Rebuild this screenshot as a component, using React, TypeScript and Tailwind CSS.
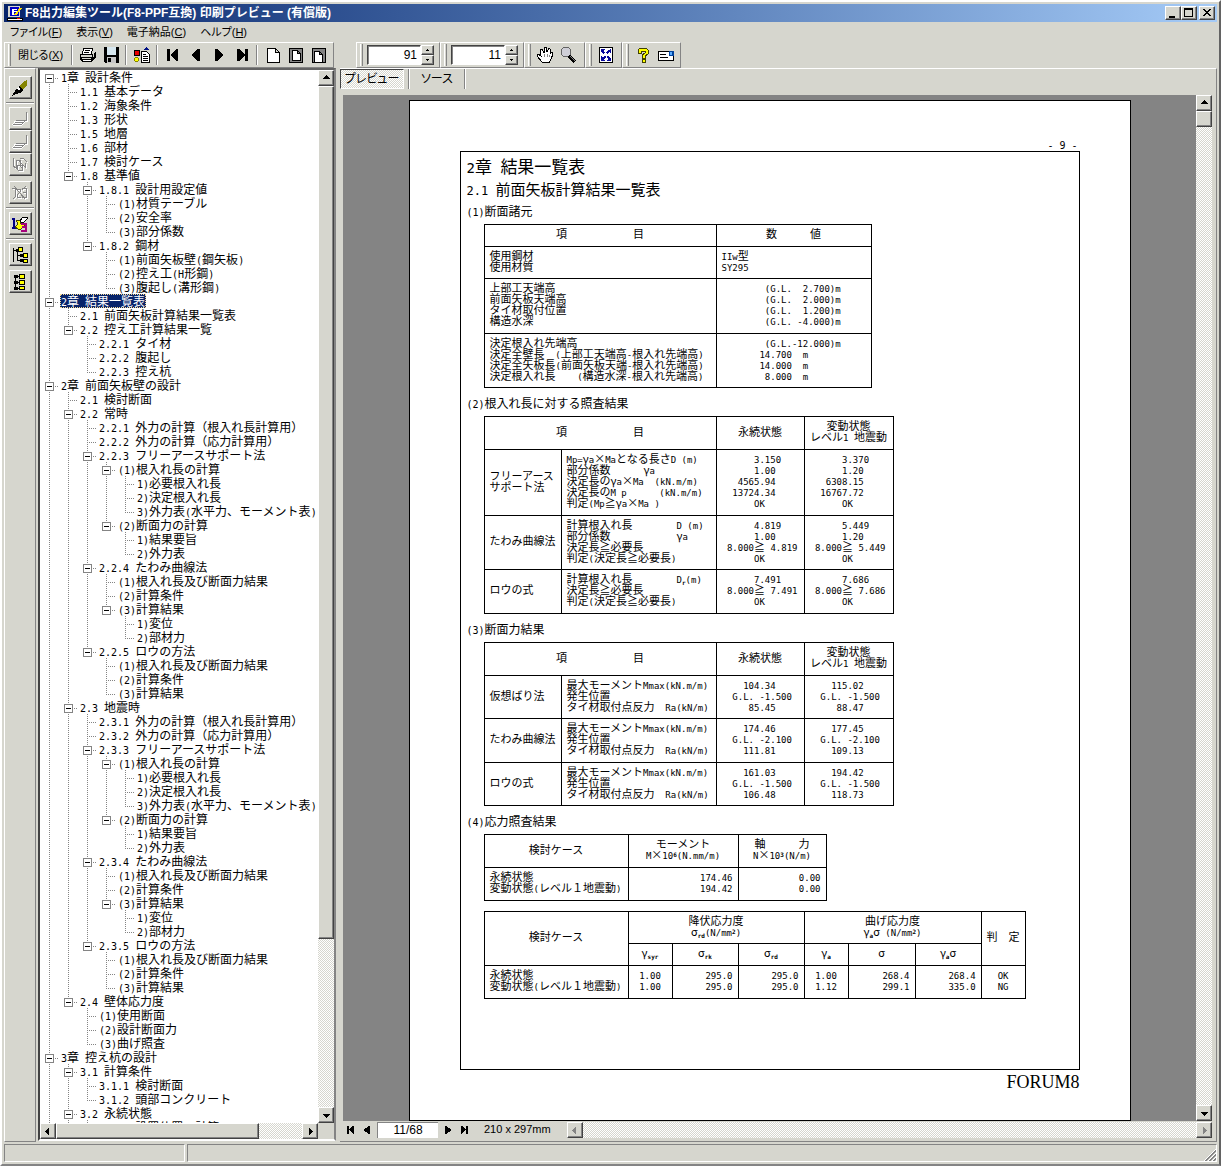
import React, { useState } from "react";
import clsx from "clsx";

const raised =
  "bg-[#d6d6ce] border border-t-white border-l-white border-r-[#424242] border-b-[#424242] shadow-[inset_-1px_-1px_#848484]";
const dither =
  "bg-[repeating-conic-gradient(#ffffff_0_25%,#d6d6ce_0_50%)] bg-[length:2px_2px]";
const uiFont =
  "font-['Liberation_Sans','Noto_Sans_CJK_JP',sans-serif] [font-feature-settings:'palt']";

// Half-width runs are set in a mono face at half the pitch of the kanji
const latinSize = {
  tree: "text-[10px]",
  cell: "text-[9px]",
  h1: "text-[14px]",
  h2: "text-[12px]",
};

const Txt = ({ t, size = "cell" }: { t: string; size?: keyof typeof latinSize }) => (
  <>
    {t.split(/([\x20-\x7e]+)/).map((part, i) =>
      i % 2 ? (
        <span key={i} className={clsx("font-['DejaVu_Sans_Mono',monospace]", latinSize[size])}>
          {part}
        </span>
      ) : (
        part
      )
    )}
  </>
);

const Sub = ({ children }: { children: string }) => (
  <span className="relative top-[2px] text-[6px] font-['DejaVu_Sans_Mono',monospace] font-bold">{children}</span>
);
const Sup = ({ children }: { children: string }) => (
  <span className="relative -top-[2px] text-[6px] font-['DejaVu_Sans_Mono',monospace] font-bold">{children}</span>
);

/* ---------- tree ---------- */

const tree: [number, string][] = [
  [0, "1章 設計条件"],
  [1, "1.1 基本データ"],
  [1, "1.2 海象条件"],
  [1, "1.3 形状"],
  [1, "1.5 地層"],
  [1, "1.6 部材"],
  [1, "1.7 検討ケース"],
  [1, "1.8 基準値"],
  [2, "1.8.1 設計用設定値"],
  [3, "(1)材質テーブル"],
  [3, "(2)安全率"],
  [3, "(3)部分係数"],
  [2, "1.8.2 鋼材"],
  [3, "(1)前面矢板壁(鋼矢板)"],
  [3, "(2)控え工(H形鋼)"],
  [3, "(3)腹起し(溝形鋼)"],
  [0, "2章 結果一覧表"],
  [1, "2.1 前面矢板計算結果一覧表"],
  [1, "2.2 控え工計算結果一覧"],
  [2, "2.2.1 タイ材"],
  [2, "2.2.2 腹起し"],
  [2, "2.2.3 控え杭"],
  [0, "2章 前面矢板壁の設計"],
  [1, "2.1 検討断面"],
  [1, "2.2 常時"],
  [2, "2.2.1 外力の計算（根入れ長計算用）"],
  [2, "2.2.2 外力の計算（応力計算用）"],
  [2, "2.2.3 フリーアースサポート法"],
  [3, "(1)根入れ長の計算"],
  [4, "1)必要根入れ長"],
  [4, "2)決定根入れ長"],
  [4, "3)外力表(水平力、モーメント表)"],
  [3, "(2)断面力の計算"],
  [4, "1)結果要旨"],
  [4, "2)外力表"],
  [2, "2.2.4 たわみ曲線法"],
  [3, "(1)根入れ長及び断面力結果"],
  [3, "(2)計算条件"],
  [3, "(3)計算結果"],
  [4, "1)変位"],
  [4, "2)部材力"],
  [2, "2.2.5 ロウの方法"],
  [3, "(1)根入れ長及び断面力結果"],
  [3, "(2)計算条件"],
  [3, "(3)計算結果"],
  [1, "2.3 地震時"],
  [2, "2.3.1 外力の計算（根入れ長計算用）"],
  [2, "2.3.2 外力の計算（応力計算用）"],
  [2, "2.3.3 フリーアースサポート法"],
  [3, "(1)根入れ長の計算"],
  [4, "1)必要根入れ長"],
  [4, "2)決定根入れ長"],
  [4, "3)外力表(水平力、モーメント表)"],
  [3, "(2)断面力の計算"],
  [4, "1)結果要旨"],
  [4, "2)外力表"],
  [2, "2.3.4 たわみ曲線法"],
  [3, "(1)根入れ長及び断面力結果"],
  [3, "(2)計算条件"],
  [3, "(3)計算結果"],
  [4, "1)変位"],
  [4, "2)部材力"],
  [2, "2.3.5 ロウの方法"],
  [3, "(1)根入れ長及び断面力結果"],
  [3, "(2)計算条件"],
  [3, "(3)計算結果"],
  [1, "2.4 壁体応力度"],
  [2, "(1)使用断面"],
  [2, "(2)設計断面力"],
  [2, "(3)曲げ照査"],
  [0, "3章 控え杭の設計"],
  [1, "3.1 計算条件"],
  [2, "3.1.1 検討断面"],
  [2, "3.1.2 頭部コンクリート"],
  [1, "3.2 永続状態"],
  [2, "3.2.1 設置位置の計算"],
];

// does the branch at this level go on below row i?
const goesOn = (i: number, level: number) => {
  for (let j = i + 1; j < tree.length; j++) {
    if (tree[j][0] < level) return false;
    if (tree[j][0] === level) return true;
  }
  return true;
};

const Branch = ({ i, level }: { i: number; level: number }) => {
  const own = tree[i][0] === level;
  const isParent = own && i + 1 < tree.length && tree[i + 1][0] > level;
  const on = goesOn(i, level);
  return (
    <svg width="19" height="14" className="shrink-0" shapeRendering="crispEdges">
      <g stroke="#848484" strokeDasharray="1 1">
        {(own || on) && <path d={`M9.5 ${i === 0 ? 8 : 0}V${on ? 14 : 9}`} />}
        {own && <path d="M9 8.5H19" />}
      </g>
      {isParent && (
        <>
          <rect x="5.5" y="4.5" width="8" height="8" fill="#fff" stroke="#848484" />
          <path d="M7 8.5h5" stroke="#000" />
        </>
      )}
    </svg>
  );
};

/* ---------- small widgets ---------- */

const arrows = {
  up: "M4 8h7v-1h-1v-1h-1v-1h-1v-1h-1v1h-1v1h-1v1h-1z",
  down: "M4 6h7v1h-1v1h-1v1h-1v1h-1v-1h-1v-1h-1v-1h-1z",
  left: "M8 4v7h-1v-1h-1v-1h-1v-1h-1v-1h1v-1h1v-1h1v-1z",
  right: "M6 4v7h1v-1h1v-1h1v-1h1v-1h-1v-1h-1v-1h-1v-1z",
};

const ScrollButton = ({ dir, off }: { dir: keyof typeof arrows; off?: boolean }) => (
  <button aria-label={dir} className={clsx(raised, "w-4 h-4 shrink-0")}>
    <svg width="14" height="14" shapeRendering="crispEdges">
      <path d={arrows[dir]} fill={off ? "#848484" : "#000"} />
    </svg>
  </button>
);

const Grip = () => (
  <div className="w-2 shrink-0 flex justify-center py-px">
    <div className="w-[3px] h-full border-l border-r border-l-white border-r-[#848484]" />
  </div>
);

const Sep = () => (
  <div className="w-2 shrink-0 flex justify-center py-[2px]">
    <div className="w-[2px] border-l border-l-[#848484] bg-white" />
  </div>
);

const Bar = ({ children }: { children: React.ReactNode }) => (
  <div className="flex h-[26px] border border-t-white border-l-white border-r-[#848484] border-b-[#848484]">
    <Grip />
    {children}
  </div>
);

const Tool = ({ label, children }: { label: string; children: React.ReactNode }) => (
  <button aria-label={label} className="w-[23px] h-6 flex items-center justify-center">
    <svg width="18" height="18" viewBox="0 0 18 18" shapeRendering="crispEdges">
      {children}
    </svg>
  </button>
);

const Spin = ({ value, label }: { value: string; label: string }) => {
  const [v, setV] = useState(value);
  return (
    <div className="flex items-center pl-[2px] pr-[5px]">
      <input
        aria-label={label}
        value={v}
        onChange={(e) => setV(e.target.value)}
        className="w-[54px] h-5 bg-white text-right text-[12px] px-[3px] border border-t-[#424242] border-l-[#424242] border-r-white border-b-white shadow-[inset_1px_1px_#848484] outline-none"
      />
      <div className="flex flex-col">
        <button aria-label="増やす" onClick={() => setV(String(+v + 1))} className={clsx(raised, "w-[13px] h-[10px]")}>
          <svg width="11" height="8" shapeRendering="crispEdges"><path d="M4 5h3v-1h-1v-1h-1v1h-1z" /></svg>
        </button>
        <button aria-label="減らす" onClick={() => setV(String(+v - 1))} className={clsx(raised, "w-[13px] h-[10px]")}>
          <svg width="11" height="8" shapeRendering="crispEdges"><path d="M4 3h3v1h-1v1h-1v-1h-1z" /></svg>
        </button>
      </div>
    </div>
  );
};

const SideButton = ({ label, children }: { label: string; children: React.ReactNode }) => (
  <button aria-label={label} className={clsx(raised, "w-[23px] h-[23px] shrink-0 flex items-center justify-center")}>
    <svg width="18" height="18" viewBox="0 0 18 18" shapeRendering="crispEdges">
      {children}
    </svg>
  </button>
);

const SideSep = () => (
  <div className="h-2 w-7 shrink-0 flex items-center">
    <div className="w-full h-[2px] border-t border-t-[#848484] bg-white" />
  </div>
);

const Stack = () => (
  <g fill="none" stroke="#848484">
    <path d="M16.5 3v8h-12l-3 4M14.500 11l-2 2h-9M12.500 13l-2 2h-9" stroke="#fff" />
    <path d="M15.500 2v8h-11M14.500 10.500l-2 2h-9M12.500 12.500l-2 2h-9" />
  </g>
);

const nav = {
  first: "M3 3h3v12h-3zM14 3v12h-2l-1-1-5-5 5-5 1-1z",
  prev: "M13 3v12h-2l-6-5v-2l6-5z",
  next: "M5 3v12h2l6-5v-2l-6-5z",
  last: "M12 3h3v12h-3zM4 3v12h2l1-1 5-5-5-5-1-1z",
};

const PageNav = ({ dir }: { dir: keyof typeof nav }) => (
  <button aria-label={dir} className="w-4 h-4 shrink-0 flex items-center justify-center">
    <svg width="12" height="12" viewBox="0 0 18 18" shapeRendering="crispEdges">
      <path d={nav[dir]} />
    </svg>
  </button>
);

/* ---------- report ---------- */

type CellProps = {
  lines: React.ReactNode[];
  className?: string;
  head?: boolean;
  colSpan?: number;
  rowSpan?: number;
};

const Cell = ({ lines, className, head, ...rest }: CellProps) => {
  const Tag = head ? "th" : "td";
  return (
    <Tag
      {...rest}
      className={clsx(
        "border border-black p-0 pb-1 font-normal whitespace-pre align-middle",
        head ? "text-center" : "px-[5px]",
        className
      )}
    >
      {lines.map((l, i) => (
        <div key={i} className="h-[11px] leading-[11px]">
          {typeof l === "string" ? <Txt t={l} /> : l}
        </div>
      ))}
    </Tag>
  );
};

const Table = ({ cols, className, children }: { cols: number[]; className: string; children: React.ReactNode }) => (
  <table className={clsx("table-fixed border-collapse text-[11px]", className)}>
    <colgroup>
      {cols.map((w, i) => (
        <col key={i} style={{ width: w }} />
      ))}
    </colgroup>
    <tbody>{children}</tbody>
  </table>
);

const caseHead = (
  <tr className="h-[33px]">
    <Cell head colSpan={2} lines={["項　　　　　　目"]} />
    <Cell head lines={["永続状態"]} />
    <Cell head lines={["変動状態", "レベル1 地震動"]} />
  </tr>
);

const H3 = ({ children }: { children: string }) => (
  <h3 className="pl-[6px] h-5 leading-5 text-[12px]">
    <Txt t={children} size="tree" />
  </h3>
);

const Report = () => (
  <div className="w-[722px] h-[1021px] shrink-0 bg-white border border-black flex flex-col px-[50px] pt-9 font-['Noto_Sans_CJK_JP',sans-serif] [font-feature-settings:normal] text-black">
    <div className="h-[14px] leading-[14px] pr-[2px] text-right whitespace-pre">
      <Txt t="- 9 -" size="tree" />
    </div>
    <div className="h-[919px] border border-black pt-1">
      <h1 className="pl-[6px] h-5 leading-5 text-[17px]">
        <Txt t="2章 結果一覧表" size="h1" />
      </h1>
      <h2 className="pl-[6px] mt-[3px] h-5 leading-5 text-[15px]">
        <Txt t="2.1 前面矢板計算結果一覧表" size="h2" />
      </h2>
      <div className="mt-[2px]">
        <H3>(1)断面諸元</H3>
      </div>
      <div className="pl-[23px] mt-[3px]">
        <Table cols={[232, 155]} className="w-[388px]">
          <tr className="h-[22px]">
            <Cell head lines={["項　　　　　　目"]} />
            <Cell head lines={["数　　　値"]} />
          </tr>
          <tr className="h-8">
            <Cell lines={["使用鋼材", "使用材質"]} />
            <Cell lines={["IIw型", "SY295"]} />
          </tr>
          <tr className="h-[55px]">
            <Cell lines={["上部工天端高", "前面矢板天端高", "タイ材取付位置", "構造水深"]} />
            <Cell
              lines={[
                "        (G.L.  2.700)m",
                "        (G.L.  2.000)m",
                "        (G.L.  1.200)m",
                "        (G.L. -4.000)m",
              ]}
            />
          </tr>
          <tr className="h-[54px]">
            <Cell
              lines={[
                "決定根入れ先端高",
                "決定全壁長  (上部工天端高-根入れ先端高)",
                "決定全矢板長(前面矢板天端-根入れ先端高)",
                "決定根入れ長    (構造水深-根入れ先端高)",
              ]}
            />
            <Cell
              lines={["        (G.L.-12.000)m", "       14.700  m", "       14.000  m", "        8.000  m"]}
            />
          </tr>
        </Table>
      </div>

      <div className="mt-[5px]">
        <H3>(2)根入れ長に対する照査結果</H3>
      </div>
      <div className="pl-[23px] mt-[3px]">
        <Table cols={[77, 155, 88, 89]} className="w-[410px]">
          {caseHead}
          <tr className="h-[66px]">
            <Cell lines={["フリーアース", "サポート法"]} />
            <Cell
              lines={[
                "Mp=γa×Maとなる長さD (m)",
                "部分係数　　　γa",
                "決定長のγa×Ma  (kN.m/m)",
                "決定長のM p      (kN.m/m)",
                "判定(Mp≧γa×Ma )",
              ]}
            />
            <Cell lines={["      3.150", "      1.00", "   4565.94", "  13724.34", "      OK"]} />
            <Cell lines={["      3.370", "      1.20", "   6308.15", "  16767.72", "      OK"]} />
          </tr>
          <tr className="h-[54px]">
            <Cell lines={["たわみ曲線法"]} />
            <Cell
              lines={["計算根入れ長　　　　D (m)", "部分係数　　　　　　γa", "決定長≧必要長", "判定(決定長≧必要長)"]}
            />
            <Cell lines={["      4.819", "      1.00", " 8.000≧ 4.819", "      OK"]} />
            <Cell lines={["      5.449", "      1.20", " 8.000≧ 5.449", "      OK"]} />
          </tr>
          <tr className="h-11">
            <Cell lines={["ロウの式"]} />
            <Cell
              lines={[
                <>
                  <Txt t="計算根入れ長　　　　D" />
                  <Sub>r</Sub>
                  <Txt t="(m)" />
                </>,
                "決定長≧必要長",
                "判定(決定長≧必要長)",
              ]}
            />
            <Cell lines={["      7.491", " 8.000≧ 7.491", "      OK"]} />
            <Cell lines={["      7.686", " 8.000≧ 7.686", "      OK"]} />
          </tr>
        </Table>
      </div>

      <div className="mt-[5px]">
        <H3>(3)断面力結果</H3>
      </div>
      <div className="pl-[23px] mt-[3px]">
        <Table cols={[77, 155, 88, 89]} className="w-[410px]">
          {caseHead}
          {[
            ["仮想ばり法", "    104.34", "  G.L. -1.500", "     85.45", "    115.02", "     88.47"],
            ["たわみ曲線法", "    174.46", "  G.L. -2.100", "    111.81", "    177.45", "    109.13"],
            ["ロウの式", "    161.03", "  G.L. -1.500", "    106.48", "    194.42", "    118.73"],
          ].map(([name, m1, gl, r1, m2, r2], i) => (
            <tr key={name} className={i === 1 ? "h-11" : "h-[43px]"}>
              <Cell lines={[name]} />
              <Cell lines={["最大モーメントMmax(kN.m/m)", "発生位置", "タイ材取付点反力  Ra(kN/m)"]} />
              <Cell lines={[m1, gl, r1]} />
              <Cell lines={[m2, gl, r2]} />
            </tr>
          ))}
        </Table>
      </div>

      <div className="mt-[5px]">
        <H3>(4)応力照査結果</H3>
      </div>
      <div className="pl-[23px] mt-[3px]">
        <Table cols={[144, 110, 88]} className="w-[343px]">
          <tr className="h-[33px]">
            <Cell head lines={["検討ケース"]} />
            <Cell head lines={["モーメント", <><Txt t="M×10" /><Sup>6</Sup><Txt t="(N.mm/m)" /></>]} />
            <Cell head lines={["軸　　　力", <><Txt t="N×10" /><Sup>3</Sup><Txt t="(N/m)" /></>]} />
          </tr>
          <tr className="h-[33px]">
            <Cell lines={["永続状態", "変動状態(レベル１地震動)"]} />
            <Cell className="text-right" lines={["174.46", "194.42"]} />
            <Cell className="text-right" lines={["0.00", "0.00"]} />
          </tr>
        </Table>
        <div className="h-[10px]" />
        <Table cols={[144, 44, 66, 66, 44, 67, 66, 44]} className="w-[542px]">
          <tr className="h-8">
            <Cell head rowSpan={2} lines={["検討ケース"]} />
            <Cell head colSpan={3} lines={["降伏応力度", <>σ<Sub>rd</Sub><Txt t="(N/mm" /><Sup>2</Sup><Txt t=")" /></>]} />
            <Cell head colSpan={3} lines={["曲げ応力度", <>γ<Sub>a</Sub>σ<Txt t=" (N/mm" /><Sup>2</Sup><Txt t=")" /></>]} />
            <Cell head rowSpan={2} lines={["判　定"]} />
          </tr>
          <tr className="h-[22px]">
            <Cell head lines={[<>γ<Sub>syr</Sub></>]} />
            <Cell head lines={[<>σ<Sub>rk</Sub></>]} />
            <Cell head lines={[<>σ<Sub>rd</Sub></>]} />
            <Cell head lines={[<>γ<Sub>a</Sub></>]} />
            <Cell head lines={["σ"]} />
            <Cell head lines={[<>γ<Sub>a</Sub>σ</>]} />
          </tr>
          <tr className="h-[33px]">
            <Cell lines={["永続状態", "変動状態(レベル１地震動)"]} />
            <Cell className="text-center" lines={["1.00", "1.00"]} />
            <Cell className="text-right" lines={["295.0", "295.0"]} />
            <Cell className="text-right" lines={["295.0", "295.0"]} />
            <Cell className="text-center" lines={["1.00", "1.12"]} />
            <Cell className="text-right" lines={["268.4", "299.1"]} />
            <Cell className="text-right" lines={["268.4", "335.0"]} />
            <Cell className="text-center" lines={["OK", "NG"]} />
          </tr>
        </Table>
      </div>
    </div>
    <div className="text-right text-[18px] leading-6 font-['Liberation_Serif',serif]">FORUM8</div>
  </div>
);

/* ---------- window ---------- */

const menus = [
  ["ファイル", "F"],
  ["表示", "V"],
  ["電子納品", "C"],
  ["ヘルプ", "H"],
];

const App: React.FC = () => {
  const [selected, setSelected] = useState(16);
  const [page, setPage] = useState("11/68");

  return (
    <div
      className={clsx(
        "h-screen flex flex-col overflow-hidden bg-[#d6d6ce] text-[12px] text-black p-[2px]",
        "border-2 border-t-white border-l-white border-r-[#636363] border-b-[#848484]",
        uiFont
      )}
    >
      {/* title bar */}
      <div className="h-[18px] shrink-0 flex items-center pl-[3px] pr-[2px] bg-linear-to-r from-[#08246b] to-[#a5cbf7] text-white">
        <svg width="16" height="16" shapeRendering="crispEdges" className="mr-[2px]">
          <path d="M1 1h12v11h-12z" fill="#d6d6ce" />
          <path d="M3 2h9v9h-9z" fill="#0000c6" />
          <path d="M5 4h5v1h-3v1h3v1h-3v3h-2z" fill="#fff" />
          <path d="M0 13h15v2h-15z" fill="#fff" stroke="#000" strokeWidth="1" />
          <path d="M8 10l6-7" stroke="#ffde00" strokeWidth="2" />
          <path d="M10 13h3v1h-3z" fill="#f00" />
        </svg>
        <h1 className="grow whitespace-nowrap font-bold text-[12px] leading-[18px] [font-feature-settings:normal]">
          F8出力編集ツール(F8-PPF互換) 印刷プレビュー (有償版)
        </h1>
        <button aria-label="最小化" className={clsx(raised, "w-4 h-[14px]")}>
          <svg width="14" height="12" shapeRendering="crispEdges"><path d="M3 9h6v2h-6z" /></svg>
        </button>
        <button aria-label="最大化" className={clsx(raised, "w-4 h-[14px]")}>
          <svg width="14" height="12" shapeRendering="crispEdges"><path d="M2 1h9v9h-9zM3 3v6h7v-6z" fillRule="evenodd" /></svg>
        </button>
        <button aria-label="閉じる" className={clsx(raised, "w-4 h-[14px] ml-[2px]")}>
          <svg width="14" height="12" shapeRendering="crispEdges">
            <path d="M3 2h2v1h1v1h2v-1h1v-1h2v1h-1v1h-1v1h-1v1h1v1h1v1h1v1h-2v-1h-1v-1h-2v1h-1v1h-2v-1h1v-1h1v-1h1v-1h-1v-1h-1v-1h-1z" />
          </svg>
        </button>
      </div>

      <nav className="h-[19px] shrink-0 flex items-center pl-[6px] gap-[14px] text-[11px]">
        {menus.map(([name, key]) => (
          <button key={key} className="whitespace-nowrap leading-[18px]">
            {name}(<span className="underline">{key}</span>)
          </button>
        ))}
      </nav>

      {/* tool bars */}
      <div className="mt-px shrink-0 flex">
        <Bar>
          <button className="w-[55px] text-[11px] whitespace-nowrap">
            閉じる(<span className="underline">X</span>)
          </button>
          <Sep />
          <Tool label="印刷">
            <path d="M5 2h9l-2 6h-9z" fill="#fff" stroke="#000" />
            <path d="M6 4.500h5M5 6.500h5" stroke="#000" />
            <path d="M1 8h13l3-3v6l-4 5h-10l-2-3z" fill="#000" />
            <path d="M2 9h11v2h-11zM3 12h9v1h-9zM14 8h1v3h-1z" fill="#d6d6ce" />
            <path d="M4 14h8v1h-8z" fill="#fff" />
          </Tool>
          <Tool label="保存">
            <path d="M2 1h15v16h-14l-1-1z" />
            <path d="M5 1h9v8h-9z" fill="#d6e7ef" />
            <path d="M5 11h9v6h-9z" fill="#c6c6c6" />
            <path d="M6 12h3v4h-3z" />
          </Tool>
          <Sep />
          <Tool label="章の編集">
            <path d="M1 4h5v5h-5z" fill="#e70000" stroke="#000" strokeWidth="1" />
            <path d="M2 11h3v1h1v3h-1v1h-3v-1h-1v-3h1z" fill="#848400" />
            <path d="M2 12h3v3h-3z" fill="#ff0" />
            <path d="M8.500 5.500h5l3 3v8h-8z" fill="#fff" stroke="#000" />
            <path d="M10 8.500h3M10 10.500h5M10 12.500h5M10 14.500h5" stroke="#000" />
            <path d="M10 4h6l-3-3z" fill="#001084" />
          </Tool>
          <Sep />
          {(["first", "prev", "next", "last"] as const).map((d) => (
            <Tool key={d} label={d}>
              <path d={nav[d]} />
            </Tool>
          ))}
          <Sep />
          <Tool label="用紙">
            <path d="M3.500 2.500h8l4 4v10h-12zM11.500 2.500v4h4" fill="#fff" stroke="#000" />
          </Tool>
          <Tool label="余白">
            <path d="M2.500 2.500h13v14h-13z" fill="#848484" stroke="#000" />
            <path d="M5.500 4.500h5l3 3v7h-8zM10.500 4.500v3h3" fill="#fff" stroke="#000" />
          </Tool>
          <Tool label="見開き">
            <path d="M2.500 2.500h13v14h-13z" fill="#848484" stroke="#000" />
            <path d="M4.500 5.500h5l3 3v8h-8zM9.500 5.500v3h3" fill="#fff" stroke="#000" />
          </Tool>
          <div className="w-[3px]" />
        </Bar>
        <div className="w-[22px] shrink-0" />
        <Bar>
          <Spin value="91" label="倍率" />
        </Bar>
        <Bar>
          <Spin value="11" label="ページ" />
        </Bar>
        <Bar>
          <Tool label="移動">
            <path
              d="M6 16l-5-6 1-2 3 2-1-6 2-1 2 4V1h2l1 5 2-4 1 1v5l2-2 1 2-2 5-2 4z"
              fill="#fff"
              stroke="#000"
            />
            <path d="M8 8v3M11 8v3M13 9v2" stroke="#848484" />
          </Tool>
          <Tool label="拡大">
            <circle cx="7" cy="6" r="5" fill="#ceced6" stroke="#636363" />
            <path d="M10 10l6 6" stroke="#000" strokeWidth="3" />
            <path d="M11 10l5 5" stroke="#848484" />
          </Tool>
          <div className="w-[5px]" />
        </Bar>
        <Bar>
          <Tool label="全体表示">
            <path d="M2.500 1.500h13v15h-13z" fill="#fff" stroke="#000" />
            <path d="M4 3h4l-2 2 2 2-2 1-2-2zM14 3v4l-2-1-2 2-1-2 2-2zM4 15v-5l2 2 2-3 1 2-2 2 1 2zM14 15h-4l1-2-2-2 2-1 3 2z" fill="#08089c" />
          </Tool>
          <div className="w-1" />
        </Bar>
        <Bar>
          <Tool label="ヘルプ">
            <path
              d="M4 6V4l2-2h6l2 2v4l-3 2v2H8V9l3-2V5H7v2H4zM8 13h3v3H8z"
              fill="#ffff00"
              stroke="#424200"
            />
          </Tool>
          <Tool label="メール">
            <path d="M1.500 5.500h15v9h-15z" fill="#fff" stroke="#000" />
            <path d="M3 8.500h6M3 11.500h8" stroke="#000" />
            <path d="M12 5h5v5h-5z" fill="#00429c" />
            <path d="M13 6h2v3h-2z" fill="#5aadff" />
          </Tool>
          <div className="w-[3px]" />
        </Bar>
      </div>

      <main className="grow min-h-0 flex">
        {/* side tools */}
        <aside className="w-8 shrink-0 mr-[2px] flex flex-col items-center pt-[7px] border border-t-white border-l-white border-r-[#848484] border-b-[#848484]">
          <SideButton label="書式">
            <path d="M16 1v5l-5 5-3-3 5-6z" fill="#848400" />
            <path d="M8 7l4 4-3 3-4 1-4 2 3-5z" />
            <path d="M7 9l2 2" stroke="#fff" strokeWidth="2" />
          </SideButton>
          <SideSep />
          <SideButton label="前面へ"><Stack /></SideButton>
          <SideButton label="背面へ"><Stack /></SideButton>
          <SideButton label="番号">
            <g fill="none" stroke="#fff" transform="translate(1 1)">
              <path d="M2 2v8l3 2V4h4v5l3 5M8 5l6 6v-4M6 9h5v5H7zM9 2h3l4 4" />
            </g>
            <path d="M2 2v8l3 2V4h4v5l3 5M8 5l6 6v-4M6 9h5v5H7zM9 2h3l4 4" fill="none" stroke="#848484" />
          </SideButton>
          <div className="h-[5px] shrink-0" />
          <SideButton label="番号解除">
            <g fill="none" stroke="#fff" transform="translate(1 1)">
              <path d="M1 4h3v8M6 5h3v3l-3 3v2h4M11 4h4v4h-3M15 8v5h-4M3 2l11 13M15 2l-4 4M5 12l-3 3" />
            </g>
            <path
              d="M1 4h3v8M6 5h3v3l-3 3v2h4M11 4h4v4h-3M15 8v5h-4M3 2l11 13M15 2l-4 4M5 12l-3 3"
              fill="none"
              stroke="#848484"
            />
          </SideButton>
          <SideSep />
          <SideButton label="番号振り直し">
            <path d="M1 4h2v8M1 12.500h4" fill="none" stroke="#000084" strokeWidth="2" />
            <path d="M5 5h4v3l4 1v2l-3 3h-3l-3-2 3-3z" fill="#ff0" stroke="#424200" />
            <path d="M10 9h5v7h-5M11 12h4" fill="none" stroke="#a5007b" strokeWidth="2" />
            <path d="M9 6l3-4h4l1 1-4 4h-3z" fill="#fff" stroke="#000" />
          </SideButton>
          <SideSep />
          <SideButton label="すべて展開">
            <path d="M2.500 2v14M2 4.500h6M6.500 4v11M6 9.500h6M6 14.500h6" stroke="#000" />
            <path d="M7.500 1.500h4v4h-4zM12.500 7.500h4v4h-4zM12.500 13.500h4v3h-4z" fill="#ff0" stroke="#000" />
            <path d="M5 3h3v3h-3zM9 8h3v3h-3zM9 13h3v3h-3z" />
          </SideButton>
          <div className="h-1 shrink-0" />
          <SideButton label="すべて折りたたむ">
            <path d="M4.500 2v14" stroke="#000" />
            <path d="M8.500 1.500h5v4h-5zM8.500 7.500h5v4h-5zM8.500 13.500h5v3h-5z" fill="#ff0" stroke="#000" />
            <path d="M3 2h4v3h-4zM3 8h4v3h-4zM3 14h4v3h-4zM6 3h2v1h-2zM6 9h2v1h-2zM6 15h2v1h-2z" />
          </SideButton>
        </aside>

        {/* outline */}
        <div className="w-[298px] mb-px shrink-0 flex flex-col bg-white border-2 border-t-[#636363] border-l-[#424242] border-r-[#848484] border-b-white">
          <div className="grow min-h-0 flex">
            <ul role="tree" className="grow min-w-0 overflow-hidden font-['Noto_Sans_CJK_JP',sans-serif] [font-feature-settings:normal]">
              {tree.map(([depth, name], i) => (
                <li
                  key={i}
                  role="treeitem"
                  aria-selected={i === selected}
                  onClick={() => setSelected(i)}
                  className="flex h-[14px] whitespace-pre leading-[14px]"
                >
                  {Array.from({ length: depth + 1 }, (_, level) => (
                    <Branch key={level} i={i} level={level} />
                  ))}
                  <span
                    className={clsx(
                      "px-px ml-px h-[14px]",
                      i === selected && "bg-[#08246b] text-white outline-1 -outline-offset-1 outline-dotted outline-[#f7db95]"
                    )}
                  >
                    <Txt t={name} size="tree" />
                  </span>
                </li>
              ))}
            </ul>
            <div className={clsx("w-4 shrink-0 flex flex-col", dither)}>
              <ScrollButton dir="up" />
              <div className={clsx(raised, "h-[81%]")} />
              <div className="grow" />
              <ScrollButton dir="down" />
            </div>
          </div>
          <div className="h-4 shrink-0 flex">
            <div className={clsx("grow flex", dither)}>
              <ScrollButton dir="left" />
              <div className={clsx(raised, "w-[73%]")} />
              <div className="grow" />
              <ScrollButton dir="right" />
            </div>
            <div className="w-4 shrink-0 bg-[#d6d6ce]" />
          </div>
        </div>

        {/* preview */}
        <section className="grow min-w-0 ml-1 flex flex-col pl-[3px] pr-1 pb-[3px] border-t border-r border-b border-t-white border-r-[#848484] border-b-[#848484]">
          <div role="tablist" className="h-[26px] shrink-0 flex items-start">
            <button
              role="tab"
              aria-selected
              className={clsx(
                dither,
                "w-16 h-5 -ml-[3px] leading-[18px] whitespace-nowrap border border-t-[#424242] border-l-[#424242] border-r-white border-b-white"
              )}
            >
              プレビュー
            </button>
            <div className="w-[2px] h-5 ml-1 border-l border-l-[#848484] bg-white" />
            <button role="tab" aria-selected={false} className="w-[54px] h-5 leading-[18px]">
              ソース
            </button>
            <div className="w-[2px] h-5 border-l border-l-[#848484] bg-white" />
          </div>
          <div className="grow min-h-0 flex">
            <div className="grow min-w-0 overflow-hidden bg-[#848484] pt-[5px] flex justify-center items-start">
              <Report />
            </div>
            <div className={clsx("w-4 shrink-0 flex flex-col", dither)}>
              <ScrollButton dir="up" />
              <div className={clsx(raised, "h-4")} />
              <div className="grow" />
              <ScrollButton dir="down" />
            </div>
          </div>
          <div className="h-[17px] shrink-0 flex items-center">
            <PageNav dir="first" />
            <PageNav dir="prev" />
            <input
              aria-label="ページ番号"
              value={page}
              onChange={(e) => setPage(e.target.value)}
              className="w-[61px] h-4 mx-[2px] bg-white text-center text-[12px] border-t border-l border-[#848484] outline-none"
            />
            <PageNav dir="next" />
            <PageNav dir="last" />
            <span className="ml-3 mr-[14px] w-[69px] text-[11px] whitespace-nowrap">210 x 297mm</span>
            <div className={clsx("grow flex", dither)}>
              <ScrollButton dir="left" off />
              <div className="grow" />
              <ScrollButton dir="right" off />
            </div>
          </div>
        </section>
      </main>

      <footer className="h-[18px] mt-[2px] shrink-0 flex gap-[2px]">
        <div className="w-[181px] border border-t-[#848484] border-l-[#848484] border-r-white border-b-white" />
        <div className="grow flex justify-end items-end border border-t-[#848484] border-l-[#848484] border-r-white border-b-white">
          <svg width="13" height="13">
            <path d="M1 13L13 1M5 13L13 5M9 13L13 9" stroke="#fff" />
            <path d="M2 13L13 2M3 13L13 3M6 13L13 6M7 13L13 7M10 13L13 10M11 13L13 11" stroke="#848484" />
          </svg>
        </div>
      </footer>
    </div>
  );
};

export default App;
